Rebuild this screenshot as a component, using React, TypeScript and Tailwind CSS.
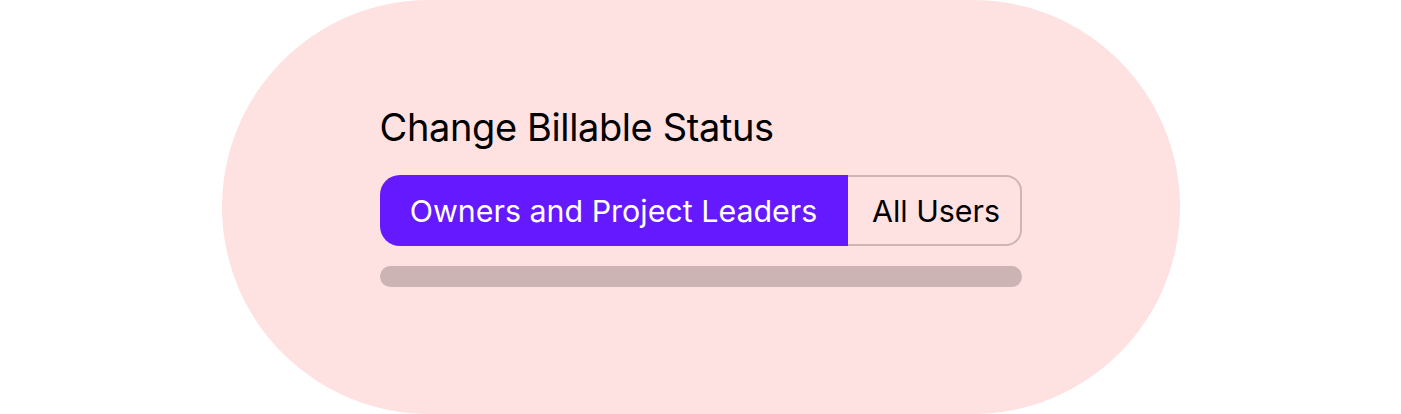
export default function App() {
    return (
        <div className="flex h-[414px] w-full items-center justify-center bg-white" style={{ fontFamily: "Inter, 'Liberation Sans', sans-serif" }}>
            <div className="flex h-[414px] w-[958px] flex-col items-center rounded-full bg-[#fee2e2] pt-[99px]">
                <div className="w-[642px]">
                    <h2 className="text-[38px] leading-[56px] tracking-[-0.01em] text-black">Change Billable Status</h2>

                    <div className="mt-[20px] flex h-[71px]">
                        <button className="flex w-[468px] items-center justify-center rounded-l-[20px] bg-[#6519ff] pt-[2px] text-[30.4px] text-white">
                            Owners and Project Leaders
                        </button>
                        <button className="flex flex-1 items-center justify-center rounded-r-[16px] border-2 border-l-0 border-[#d0b3b3] pl-[5px] pt-[2px] text-[30.4px] text-black">
                            All Users
                        </button>
                    </div>

                    <div className="mt-[20px] h-[21px] w-full rounded-full bg-[#ccb4b4]" />
                </div>
            </div>
        </div>
    );
}
